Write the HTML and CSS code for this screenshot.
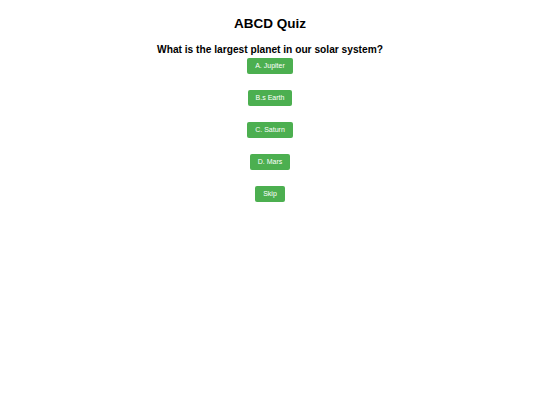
FILE: index.html
```html
<!DOCTYPE html>
<html>
<head>
<meta charset="utf-8">
<title>ABCD Quiz</title>
<link rel="stylesheet" href="styles.css">
</head>
<body>
<div class="quiz">
  <h1 class="title">ABCD Quiz</h1>
  <h2 class="question">What is the largest planet in our solar system?</h2>
  <div class="options">
    <button class="btn">A. Jupiter</button>
    <button class="btn">B.s Earth</button>
    <button class="btn">C. Saturn</button>
    <button class="btn">D. Mars</button>
    <button class="btn">Skip</button>
  </div>
</div>
</body>
</html>
```
FILE: styles.css
```css
html, body {
  margin: 0;
  padding: 0;
  background: #ffffff;
}
body {
  font-family: "Liberation Sans", Arial, sans-serif;
  color: #000;
}
.quiz {
  display: flex;
  flex-direction: column;
  align-items: center;
  padding-top: 15.5px;
}
.title {
  margin: 0;
  font-size: 13.5px;
  line-height: 16px;
  font-weight: bold;
}
.question {
  margin: 12.5px 0 0;
  font-size: 10.2px;
  line-height: 12px;
  font-weight: bold;
}
.options {
  display: flex;
  flex-direction: column;
  align-items: center;
  gap: 16px;
  margin-top: 2px;
}
.btn {
  display: block;
  height: 16px;
  padding: 0 8px;
  border: none;
  border-radius: 2px;
  background: #4caf50;
  color: #fff;
  font-family: "Liberation Sans", Arial, sans-serif;
  font-size: 7px;
  line-height: 16px;
}
```
